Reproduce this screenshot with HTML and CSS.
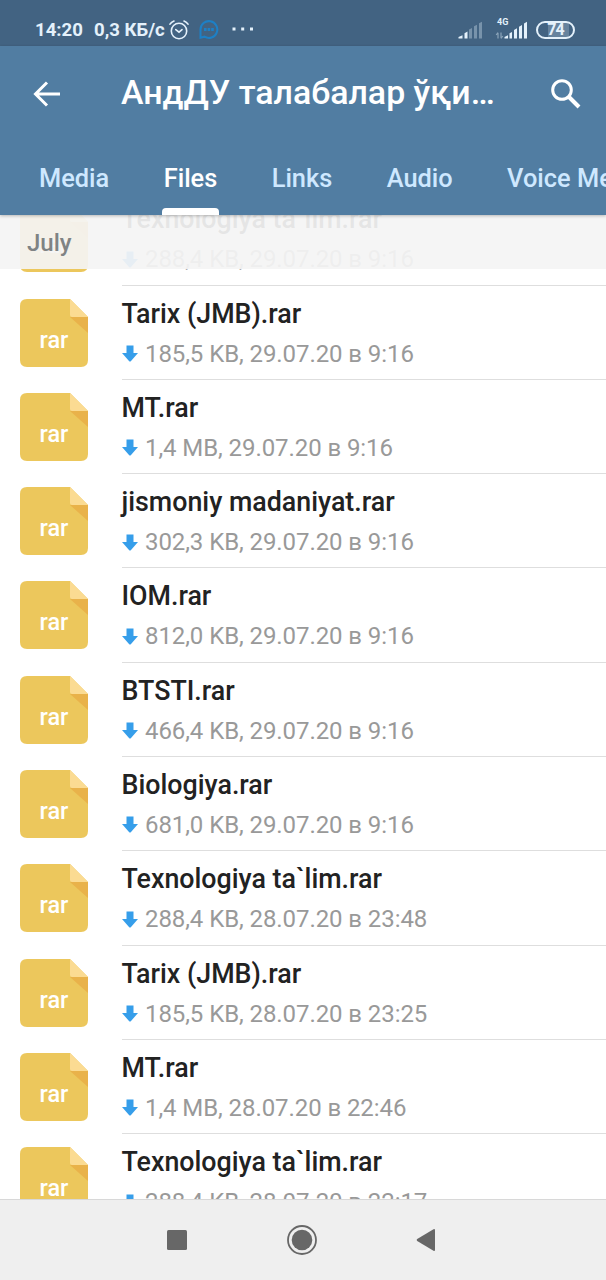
FILE: index.html
```html
<!DOCTYPE html>
<html lang="en">
<head>
    <meta charset="UTF-8">
    <meta name="viewport" content="width=device-width, initial-scale=1.0">
    <title>Shared Files</title>
    <link rel="stylesheet" href="styles.css">
</head>
<body>
    <!-- shared icons -->
    <svg class="sprite" width="0" height="0">
        <symbol id="file" viewBox="0 0 68 68">
            <path d="M7 0H50L68 18V61Q68 68 61 68H7Q0 68 0 61V7Q0 0 7 0Z" fill="#ecc75c"/>
            <path d="M50 18H68V34Z" fill="#e9b24a"/>
            <path d="M50 0L68 18H52Q50 18 50 16Z" fill="#fbdb92"/>
        </symbol>
        <symbol id="down" viewBox="0 0 16 17">
            <path d="M4.5 0.5H11.5V8H16L9 16Q8 17 7 16L0 8H4.5Z" fill="#369eea"/>
        </symbol>
    </svg>

    <div class="status-bar">
        <span class="clock">14:20</span>
        <span class="speed">0,3 КБ/с</span>
        <svg class="alarm" width="20" height="20" viewBox="0 0 20 20" fill="none" stroke="#e4f1fb" stroke-width="1.6" stroke-linecap="round">
            <circle cx="10" cy="11" r="7.7"/>
            <path d="M6.8 9.6L10 12.2L13 9.6M1 4.2Q2.3 2 5 1M15 1Q17.7 2 19 4.2"/>
        </svg>
        <svg class="chat" width="20" height="20" viewBox="0 0 20 20" fill="none" stroke="#1d80c6" stroke-width="2">
            <path d="M1.5 17.8V9.5A8.4 8.4 0 1 1 5.5 16.7L1.5 17.8Z"/>
            <path d="M5 9.5H15" stroke-width="3" stroke-dasharray="2.6 1"/>
        </svg>
        <svg class="more" width="22" height="4" viewBox="0 0 22 4" fill="#e4f1fb">
            <path d="M0.5 0.5h3v3h-3zM9.2 0.5h3v3h-3zM18 0.5h3v3h-3z"/>
        </svg>
        <svg class="signal" width="25" height="18" viewBox="0 0 25 18">
            <path d="M0.5 17.5V16L4.5 14.2V17.5ZM6.5 17.5V12.3L9.5 10.6V17.5Z" fill="#e4f1fb"/>
            <path d="M11 17.5V8.6L14 7V17.5ZM16 17.5V5.3L19 3.7V17.5ZM21 17.5V2.3L24 0.8V17.5Z" fill="#7893ab"/>
        </svg>
        <div class="mobile">
            <span class="network">4G</span>
            <svg width="33" height="18" viewBox="0 0 33 18">
                <path d="M3 17.5V12M1.2 14L3 11.5M6 11.5V17M7.8 15L6 17.5" fill="none" stroke="#8ba4b9" stroke-width="1.2"/>
                <path d="M9.5 17.5V16L13 14.2V17.5ZM14.5 17.5V12.3L17 11V17.5ZM19 17.5V9L22 7.3V17.5ZM24 17.5V5.7L27 4V17.5ZM29 17.5V2.4L32 0.8V17.5Z" fill="#e4f1fb"/>
            </svg>
        </div>
        <div class="battery">74</div>
    </div>

    <div class="header">
        <div class="title-bar">
            <svg class="back" width="28" height="26" viewBox="0 0 28 26" fill="none" stroke="#fff" stroke-width="3">
                <path d="M27 13H3M14 1.5L2.5 13L14 24.5"/>
            </svg>
            <h1>АндДУ талабалар ўқи…</h1>
            <svg class="search" width="30" height="30" viewBox="0 0 30 30" fill="none" stroke="#fff">
                <circle cx="11" cy="11" r="9.3" stroke-width="3"/>
                <path d="M17.5 17.5L28 28" stroke-width="4"/>
            </svg>
        </div>
        <div class="tabs">
            <span class="tab">Media</span>
            <span class="tab active">Files</span>
            <span class="tab">Links</span>
            <span class="tab">Audio</span>
            <span class="tab">Voice Messages</span>
        </div>
    </div>

    <div class="content">
        <div class="month">July</div>
        <div class="files" id="files"></div>
    </div>

    <div class="nav-bar">
        <svg width="20" height="20" viewBox="0 0 20 20"><rect width="20" height="20" rx="1.5" fill="#676767"/></svg>
        <svg width="30" height="30" viewBox="0 0 30 30">
            <circle cx="15" cy="15" r="14" fill="none" stroke="#676767" stroke-width="1.8"/>
            <circle cx="15" cy="15" r="10.3" fill="#676767"/>
        </svg>
        <svg width="20" height="24" viewBox="0 0 20 24"><path d="M1.2 11L17.5 1.2Q19 0.5 19 2.2V21.8Q19 23.5 17.5 22.8L1.2 13Q0 12 1.2 11Z" fill="#676767"/></svg>
    </div>

    <script>
        let files = [
            ["Texnologiya ta`lim.rar", "288,4 KB, 29.07.20 в 9:16"],
            ["Tarix (JMB).rar", "185,5 KB, 29.07.20 в 9:16"],
            ["MT.rar", "1,4 MB, 29.07.20 в 9:16"],
            ["jismoniy madaniyat.rar", "302,3 KB, 29.07.20 в 9:16"],
            ["IOM.rar", "812,0 KB, 29.07.20 в 9:16"],
            ["BTSTI.rar", "466,4 KB, 29.07.20 в 9:16"],
            ["Biologiya.rar", "681,0 KB, 29.07.20 в 9:16"],
            ["Texnologiya ta`lim.rar", "288,4 KB, 28.07.20 в 23:48"],
            ["Tarix (JMB).rar", "185,5 KB, 28.07.20 в 23:25"],
            ["MT.rar", "1,4 MB, 28.07.20 в 22:46"],
            ["Texnologiya ta`lim.rar", "288,4 KB, 28.07.20 в 22:17"]
        ];
        let html = "";
        for (let file of files) {
            html += `
                <div class="file">
                    <div class="thumb"><svg><use href="#file"/></svg><span>rar</span></div>
                    <div class="info">
                        <div class="name">${file[0]}</div>
                        <div class="meta"><svg><use href="#down"/></svg>${file[1]}</div>
                    </div>
                </div>`;
        }
        document.getElementById("files").innerHTML = html;
    </script>
</body>
</html>
```
FILE: styles.css
```css
* {
    box-sizing: border-box;
}
body {
    margin: 0;
    height: 1280px;
    display: flex;
    flex-direction: column;
    overflow: hidden;
    font-family: Roboto, "Noto Sans", sans-serif;
    background: white;
}
svg {
    display: block;
    flex: none;
}
.sprite {
    position: absolute;
}
.status-bar {
    height: 46px;
    flex: none;
    display: flex;
    align-items: center;
    padding: 13px 31px 0 35px;
    background: #426382;
    color: #e4f1fb;
    font-size: 18.6px;
    font-weight: 700;
    line-height: 24px;
    white-space: nowrap;
}
.clock {
    width: 59px;
}
.speed {
    width: 75px;
}
.chat {
    margin-left: 10px;
}
.more {
    margin: -2px 0 0 13px;
}
.signal {
    margin-left: auto;
}
.mobile {
    margin: -2px 0 0 12px;
}
.mobile svg {
    margin-top: -6px;
}
.network {
    display: block;
    height: 9px;
    padding-left: 2px;
    font-size: 9px;
    line-height: 9px;
}
.battery {
    width: 39px;
    height: 18px;
    margin-left: 8px;
    border: 2px solid #e4f1fb;
    border-radius: 9px;
    background: linear-gradient(90deg, #426382 10px, #66839e 10px, #66839e 31px, #426382 31px);
    font-size: 16px;
    letter-spacing: -1px;
    line-height: 14px;
    text-align: center;
}
.header {
    height: 169px;
    flex: none;
    position: relative;
    z-index: 2;
    background: #517da2;
    box-shadow: 0 1px 3px rgba(0, 0, 0, 0.25);
}
.title-bar {
    height: 96px;
    display: flex;
    align-items: center;
    padding: 0 25px 0 33px;
}
.title-bar h1 {
    flex: 1;
    margin: -2px 0 0 60px;
    color: white;
    font-size: 33.9px;
    font-weight: 500;
    line-height: 40px;
    white-space: nowrap;
}
.tabs {
    height: 73px;
    display: flex;
    padding-left: 39px;
    gap: 54.4px;
    overflow: hidden;
}
.tab {
    height: 73px;
    flex: none;
    padding-top: 21px;
    color: #cee8ff;
    font-size: 25.4px;
    font-weight: 500;
    line-height: 30px;
    white-space: nowrap;
}
.tab.active {
    display: flex;
    flex-direction: column;
    justify-content: space-between;
    color: white;
}
.tab.active::after {
    content: "";
    height: 7px;
    margin: 0 -2px;
    border-radius: 4px 4px 0 0;
    background: white;
}
.content {
    flex: 1;
    min-height: 0;
    position: relative;
    overflow: hidden;
}
.month {
    position: absolute;
    top: 0;
    left: 0;
    right: 0;
    z-index: 1;
    height: 54px;
    padding-left: 27px;
    background: rgba(244, 244, 244, 0.93);
    color: #7f8384;
    font-size: 24px;
    font-weight: 500;
    line-height: 56px;
}
.files {
    margin-top: -23.8px;
}
.file {
    height: 94.3px;
    display: flex;
    padding-left: 20px;
}
.thumb {
    width: 68px;
    height: 68px;
    margin: 13px 33.5px 0 0;
    display: grid;
}
.thumb svg,
.thumb span {
    grid-area: 1 / 1;
}
.thumb svg {
    width: 68px;
    height: 68px;
}
.thumb span {
    padding-top: 27px;
    color: white;
    font-size: 23.5px;
    font-weight: 500;
    line-height: 28px;
    text-align: center;
}
.info {
    flex: 1;
    padding-top: 12px;
    border-bottom: 1px solid #dedede;
}
.name {
    color: #222;
    font-size: 26.8px;
    font-weight: 500;
    line-height: 32px;
}
.meta {
    display: flex;
    align-items: center;
    gap: 7.5px;
    margin-top: 9px;
    color: #999;
    font-size: 24px;
    letter-spacing: -0.08px;
    line-height: 30px;
}
.meta svg {
    width: 16px;
    height: 17px;
}
.nav-bar {
    height: 81px;
    flex: none;
    display: flex;
    align-items: center;
    justify-content: space-between;
    padding: 0 170px 0 167px;
    border-top: 1px solid #d8d8d8;
    background: #efefef;
}
```
